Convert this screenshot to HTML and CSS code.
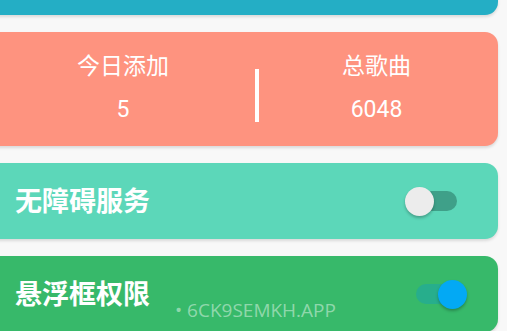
FILE: index.html
```html
<!DOCTYPE html>
<html lang="zh-CN">
<head>
  <meta charset="UTF-8" />
  <meta name="viewport" content="width=device-width, initial-scale=1.0" />
  <title>设置</title>
  <link rel="stylesheet" href="styles.css">
</head>
<body>
  <div id="list">
    <!-- 顶部卡片（只露出底边） -->
    <div class="card card-top"></div>

    <!-- 统计 -->
    <div class="card card-stats">
      <div class="stat stat-left">
        <p class="stat-label">今日添加</p>
        <p class="stat-value">5</p>
      </div>
      <div class="stat-divider"></div>
      <div class="stat stat-right">
        <p class="stat-label">总歌曲</p>
        <p class="stat-value">6048</p>
      </div>
    </div>

    <!-- 权限开关 -->
    <div class="card card-row card-access">
      <span class="row-title">无障碍服务</span>
      <span class="switch switch-off"><span class="thumb"></span></span>
    </div>

    <div class="card card-row card-float">
      <span class="row-title">悬浮框权限</span>
      <span class="switch switch-on"><span class="thumb"></span></span>
    </div>
  </div>

  <div id="watermark">• 6CK9SEMKH.APP</div>
</body>
</html>
```

FILE: styles.css
```css
html, body {
  height: 100%;
}
body {
  font-family: Roboto, "Noto Sans CJK SC", sans-serif;
  background: #f8f8f8;
  color: #fff;
  margin: 0;
  overflow: hidden;
  position: relative;
}
#list {
  display: flex;
  flex-direction: column;
  gap: 17px;
  width: 514px;
  margin-left: -16px;
  margin-top: -45px;
}
.card {
  border-radius: 13px;
  box-shadow: 0 2px 3px rgba(0,0,0,0.12);
}
.card-top {
  height: 60px;
  background: #24aec5;
}

/* ==== 统计卡片 ==== */
.card-stats {
  height: 114px;
  background: #fe937f;
  display: grid;
  grid-template-columns: 271px 4px 1fr;
}
.stat {
  text-align: center;
  padding-top: 21px;
}
.stat-left {
  padding-left: 7px;
}
.stat-right {
  padding-right: 4px;
}
.stat p {
  margin: 0;
  font-size: 23px;
  line-height: 28px;
}
.stat-value {
  margin-top: 15px !important;
}
.stat-divider {
  height: 53px;
  margin-top: 37px;
  background: #fff;
}

/* ==== 开关行 ==== */
.card-row {
  height: 76px;
  display: flex;
  align-items: center;
  justify-content: space-between;
  padding: 0 0 0 31px;
}
.card-access {
  background: #5cd7b9;
}
.card-float {
  background: #37b96a;
}
.row-title {
  font-size: 27px;
  line-height: 32px;
  margin-top: -3px;
  font-weight: bold;
  font-family: "Noto Sans CJK SC", sans-serif;
}
.switch {
  position: relative;
  width: 49px;
  height: 20px;
  border-radius: 10px;
}
.switch .thumb {
  position: absolute;
  top: -4.5px;
  width: 29px;
  height: 29px;
  border-radius: 50%;
  box-shadow: 0 2px 3px rgba(0,0,0,0.25);
}
.switch-off {
  margin-right: 41px;
  background: #3fa089;
}
.switch-off .thumb {
  left: -3px;
  background: #ececec;
}
.switch-on {
  margin-right: 33px;
  background: #27ae8c;
}
.switch-on .thumb {
  right: -2px;
  background: #03a9f4;
}

#watermark {
  position: absolute;
  left: 175px;
  top: 298px;
  font-family: "Open Sans", sans-serif;
  font-size: 19px;
  line-height: 24px;
  color: rgba(255,255,255,0.45);
}
```
